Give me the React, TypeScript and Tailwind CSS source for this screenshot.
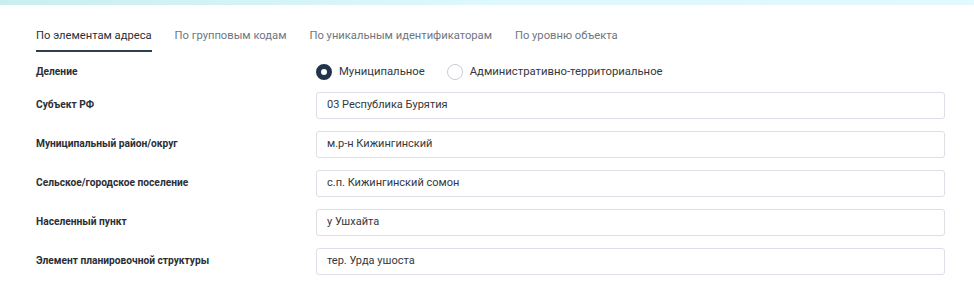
const TABS = [
  "По элементам адреса",
  "По групповым кодам",
  "По уникальным идентификаторам",
  "По уровню объекта",
]

const FIELDS = [
  { label: "Субъект РФ", value: "03 Республика Бурятия" },
  { label: "Муниципальный район/округ", value: "м.р-н Кижингинский" },
  { label: "Сельское/городское поселение", value: "с.п. Кижингинский сомон" },
  { label: "Населенный пункт", value: "у Ушхайта" },
  { label: "Элемент планировочной структуры", value: "тер. Урда ушоста" },
]

function Radio({ checked, label }: { checked?: boolean; label: string }) {
  return (
    <label className="flex items-center gap-[7px] cursor-pointer">
      {checked ? (
        <span className="h-[16px] w-[16px] rounded-full border-[5px] border-[#22344a] bg-white" />
      ) : (
        <span className="h-[16px] w-[16px] rounded-full border border-[#c9ccd4] bg-white" />
      )}
      <span className="text-[11.3px] text-[#333840]">{label}</span>
    </label>
  )
}

export default function App() {
  return (
    <div className="h-[305px] w-[974px] bg-white font-['Roboto',sans-serif]">
      <div className="h-[5px] bg-gradient-to-r from-[#c9eef2] via-[#def8fb] to-[#e2f9fd]" />

      <div className="flex gap-[23px] pl-[36px] pt-[25px]">
        {TABS.map((t, i) => (
          <div
            key={t}
            className={`pb-[8px] text-[11.2px] leading-[12px] ${
              i === 0 ? "border-b-2 border-[#2c3e50] text-[#2b2f36]" : "border-b-2 border-transparent text-[#6e7682]"
            }`}
          >
            {t}
          </div>
        ))}
      </div>

      <div className="flex flex-col pl-[36px] pr-[29px] pt-[10px]">
        <div className="flex h-[20px] items-center">
          <div className="w-[280px] text-[10.2px] font-bold text-[#2b2f36]">Деление</div>
          <div className="flex items-center gap-[22px]">
            <Radio checked label="Муниципальное" />
            <Radio label="Административно-территориальное" />
          </div>
        </div>

        <div className="mt-[10px] flex flex-col gap-[12px]">
          {FIELDS.map((f) => (
            <div key={f.label} className="flex items-center">
              <div className="w-[280px] pb-[2px] text-[10.2px] font-bold text-[#2b2f36]">{f.label}</div>
              <div className="flex h-[27px] flex-1 items-center rounded-[3px] border border-[#dcdfe5] px-[10px] text-[11px] text-[#333840]">
                {f.value}
              </div>
            </div>
          ))}
        </div>
      </div>
    </div>
  )
}
